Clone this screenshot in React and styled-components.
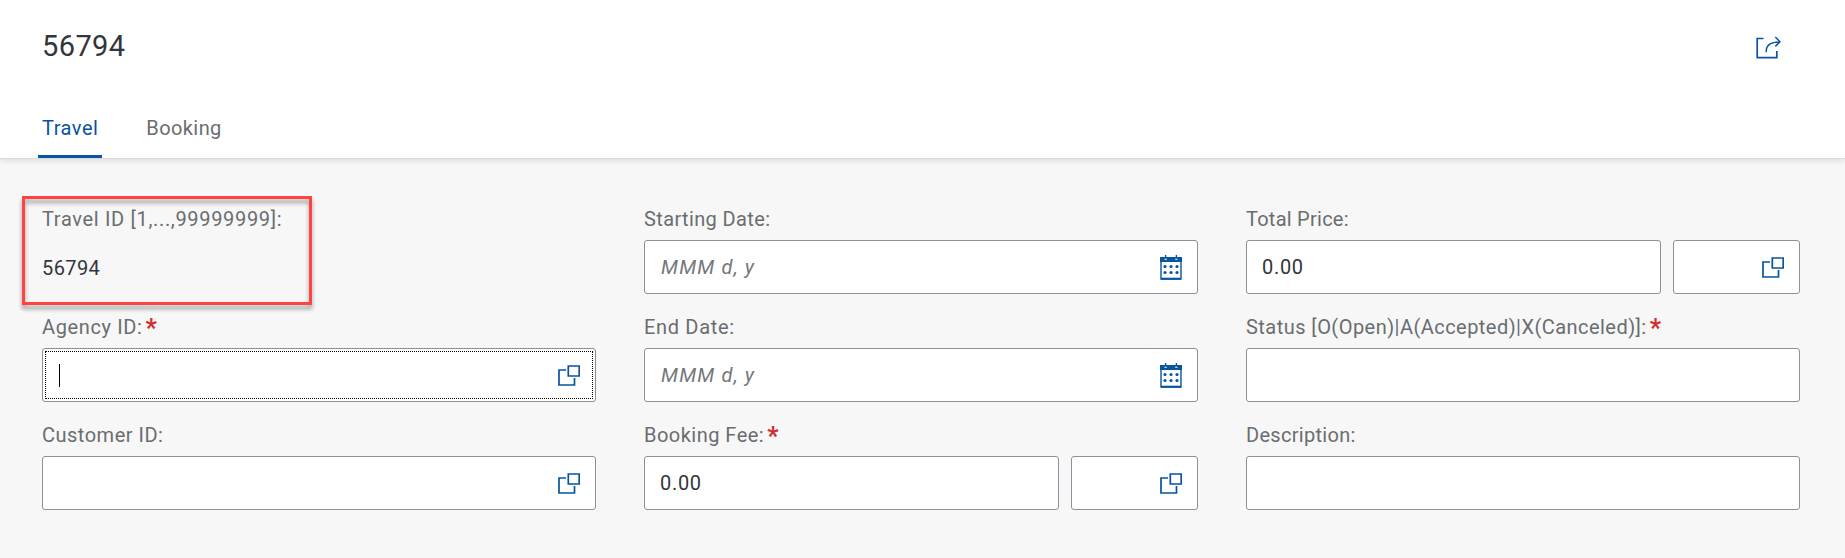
import React from "react";
import styled, { createGlobalStyle } from "styled-components";

const GlobalStyle = createGlobalStyle`
  * { box-sizing: border-box; }
  body {
    margin: 0;
    background: #f7f7f7;
    font-family: Roboto, "Liberation Sans", sans-serif;
    font-size: 20px;
    color: #32363a;
  }
`;

const Page = styled.div`
  width: 100%;
  height: 558px;
  display: flex;
  flex-direction: column;
  overflow: hidden;
`;

const Header = styled.header`
  height: 159px;
  flex: none;
  display: flex;
  flex-direction: column;
  justify-content: space-between;
  background: #fff;
  border-bottom: 1px solid #d9d9d9;
  box-shadow: 0 2px 6px rgba(0, 0, 0, 0.1);
`;

const TitleRow = styled.div`
  display: flex;
  justify-content: space-between;
  padding: 28px 64px 0 42px;
`;

const Title = styled.h1`
  margin: 0;
  font-size: 29px;
  font-weight: 400;
  line-height: 36px;
  letter-spacing: 0.4px;
`;

const ShareButton = styled.button`
  display: flex;
  border: 0;
  padding: 8px 0 0;
  background: none;
`;

const Tabs = styled.nav`
  display: flex;
  gap: 40px;
  padding-left: 38px;
`;

const Tab = styled.div`
  height: 43px;
  padding: 0 4px;
  line-height: 26px;
  letter-spacing: ${(p) => p.$track || 0}px;
  color: ${(p) => (p.$active ? "#0854a0" : "#6a6d70")};
  border-bottom: 3px solid ${(p) => (p.$active ? "#0854a0" : "transparent")};
  border-radius: 2px 2px 0 0;
`;

const Form = styled.main`
  display: grid;
  grid-template-columns: repeat(3, 554px);
  column-gap: 48px;
  padding: 39px 45px 0 42px;
`;

const Field = styled.div`
  position: relative;
  height: 108px;
`;

const Label = styled.div`
  height: 42px;
  line-height: 42px;
  white-space: nowrap;
  color: #6a6d70;
  letter-spacing: ${(p) => p.$track || 0}px;
`;

const Required = styled.span`
  margin-left: 3px;
  color: #d42f2f;
  font-size: 25px;
  font-weight: 700;
  line-height: 20px;
  vertical-align: -3px;
`;

const Controls = styled.div`
  display: flex;
  gap: 12px;
`;

const Input = styled.div`
  flex: ${(p) => (p.$width ? "none" : "1")};
  width: ${(p) => (p.$width ? `${p.$width}px` : "auto")};
  height: 54px;
  display: flex;
  align-items: center;
  justify-content: space-between;
  padding: ${(p) => (p.$focused ? "2px" : "0 15px")};
  background: #fff;
  border: 1px solid #89919a;
  border-radius: 3px;
`;

const FocusRing = styled.div`
  flex: 1;
  height: 48px;
  display: flex;
  align-items: center;
  justify-content: space-between;
  padding: 0 12px 0 13px;
  border: 1px dotted #000;
`;

const Caret = styled.span`
  width: 1px;
  height: 23px;
  background: #000;
`;

const Value = styled.span`
  letter-spacing: 0.7px;
`;

const Placeholder = styled.span`
  font-style: italic;
  color: #74777a;
  padding-left: 1px;
  letter-spacing: 1.2px;
`;

const ReadOnly = styled.div`
  line-height: 56px;
  letter-spacing: 0.4px;
`;

const Highlight = styled.div`
  position: absolute;
  left: -20px;
  top: -2px;
  width: 290px;
  height: 109px;
  border: 3px solid #ff4343;
  filter: drop-shadow(0 4px 2px rgba(0, 0, 0, 0.38));
`;

const Icon = styled.svg`
  display: block;
  flex: none;
  fill: none;
  stroke: #0854a0;
`;

const ShareIcon = () => (
  <Icon width="25" height="25" viewBox="0 0 25 25" strokeWidth="1.7">
    <path d="M7.5 2.5H1.2V21.7H20.8V15" />
    <path d="M10.3 16.2C9.8 9.4 14.5 5.8 24 5.9" strokeWidth="1.5" />
    <path d="M19.3 1L24 5.8L19.3 10.4" strokeWidth="1.5" />
  </Icon>
);

const ValueHelpIcon = () => (
  <Icon width="22" height="22" viewBox="0 0 22 22" strokeWidth="1.7">
    <path d="M8 6H1V21H16.5V14" />
    <path d="M10.3 2H21.2V12H10.3Z" />
  </Icon>
);

const CalendarIcon = () => (
  <Icon width="22" height="25" viewBox="0 0 22 25">
    <path d="M1 3V24H21V3" strokeWidth="1.4" />
    <path
      d="M0 2H22V7H0ZM4.5 3.8V4.8H6.8V3.8ZM15.2 3.8V4.8H17.5V3.8Z"
      fill="#0854a0"
      fillRule="evenodd"
      stroke="none"
    />
    <path d="M5.6 0V3M16.4 0V3" strokeWidth="1.4" />
    <path d="M1 23.7H21" strokeWidth="2" />
    <g fill="#0854a0" stroke="none">
      {[5, 11, 17].map((x) =>
        [11.5, 17.5].map((y) => <circle key={`${x}-${y}`} cx={x} cy={y} r="1.6" />)
      )}
    </g>
  </Icon>
);

const LabeledField = ({ label, track, required, children }) => (
  <Field>
    <Label $track={track}>
      {label}
      {required && <Required>*</Required>}
    </Label>
    <Controls>{children}</Controls>
  </Field>
);

const DateInput = () => (
  <Input>
    <Placeholder>MMM d, y</Placeholder>
    <CalendarIcon />
  </Input>
);

const AmountInput = () => (
  <>
    <Input>
      <Value>0.00</Value>
    </Input>
    <Input $width={127}>
      <span />
      <ValueHelpIcon />
    </Input>
  </>
);

export default function App() {
  return (
    <Page>
      <GlobalStyle />
      <Header>
        <TitleRow>
          <Title>56794</Title>
          <ShareButton aria-label="Share">
            <ShareIcon />
          </ShareButton>
        </TitleRow>
        <Tabs>
          <Tab $active $track={0.5}>Travel</Tab>
          <Tab $track={0.4}>Booking</Tab>
        </Tabs>
      </Header>
      <Form>
        <Field>
          <Label $track={0.67}>Travel ID [1,...,99999999]:</Label>
          <ReadOnly>56794</ReadOnly>
          <Highlight />
        </Field>
        <LabeledField label="Starting Date:" track={0.37}>
          <DateInput />
        </LabeledField>
        <LabeledField label="Total Price:" track={0.25}>
          <AmountInput />
        </LabeledField>

        <LabeledField label="Agency ID:" track={0.63} required>
          <Input $focused>
            <FocusRing>
              <Caret />
              <ValueHelpIcon />
            </FocusRing>
          </Input>
        </LabeledField>
        <LabeledField label="End Date:" track={0.68}>
          <DateInput />
        </LabeledField>
        <LabeledField label="Status [O(Open)|A(Accepted)|X(Canceled)]:" track={0.46} required>
          <Input />
        </LabeledField>

        <LabeledField label="Customer ID:" track={0.5}>
          <Input>
            <span />
            <ValueHelpIcon />
          </Input>
        </LabeledField>
        <LabeledField label="Booking Fee:" track={0.48} required>
          <AmountInput />
        </LabeledField>
        <LabeledField label="Description:" track={0.3}>
          <Input />
        </LabeledField>
      </Form>
    </Page>
  );
}
